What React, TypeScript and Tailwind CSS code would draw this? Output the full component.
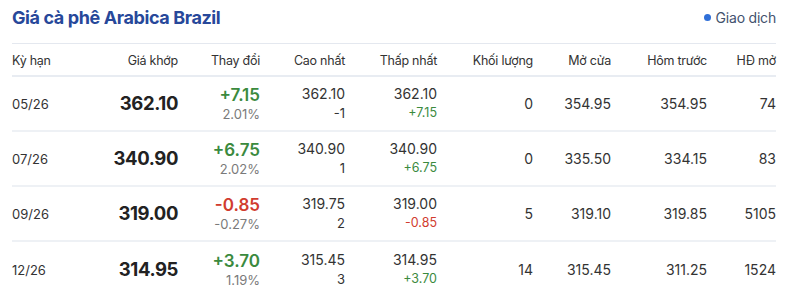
import React from 'react';

type Row = {
  term: string;
  price: string;
  change: string;
  pct: string;
  high: string;
  highSub: string;
  low: string;
  lowSub: string;
  volume: string;
  open: string;
  prev: string;
  oi: string;
};

const rows: Row[] = [
  { term: '05/26', price: '362.10', change: '+7.15', pct: '2.01%', high: '362.10', highSub: '-1', low: '362.10', lowSub: '+7.15', volume: '0', open: '354.95', prev: '354.95', oi: '74' },
  { term: '07/26', price: '340.90', change: '+6.75', pct: '2.02%', high: '340.90', highSub: '1', low: '340.90', lowSub: '+6.75', volume: '0', open: '335.50', prev: '334.15', oi: '83' },
  { term: '09/26', price: '319.00', change: '-0.85', pct: '-0.27%', high: '319.75', highSub: '2', low: '319.00', lowSub: '-0.85', volume: '5', open: '319.10', prev: '319.85', oi: '5105' },
  { term: '12/26', price: '314.95', change: '+3.70', pct: '1.19%', high: '315.45', highSub: '3', low: '314.95', lowSub: '+3.70', volume: '14', open: '315.45', prev: '311.25', oi: '1524' },
];

const cols = 'grid grid-cols-[88px_78px_82px_85px_92px_96px_78px_96px_69px]';

function tone(v: string) {
  return v.startsWith('-') ? 'text-[#d13c2f]' : 'text-[#3b8a3e]';
}

export default function App() {
  return (
    <div className="w-[800px] h-[297px] bg-white overflow-hidden font-['Inter',sans-serif] text-[#2b2b2b]">
      <div className="w-[764px] ml-3">
        <div className="flex items-center justify-between h-[33px] pt-[1px]">
          <h1 className="text-[18px] font-bold text-[#27489a] tracking-[-0.4px]">Giá cà phê Arabica Brazil</h1>
          <div className="flex items-center gap-[5px] text-[14px] text-[#43526e] tracking-[-0.2px]">
            <span className="w-[7px] h-[7px] rounded-full bg-[#2f6fd8]" />
            Giao dịch
          </div>
        </div>

        <div className="mt-[10px] border-t border-[#e4e8ef]">
          <div className={`${cols} h-[33px] items-center text-[12.5px] tracking-[-0.25px] text-[#333] border-b-2 border-[#e8ecf2]`}>
            <div className="pt-[3px]">Kỳ hạn</div>
            <div className="text-right pt-[3px]">Giá khớp</div>
            <div className="text-right pt-[3px]">Thay đổi</div>
            <div className="text-right pt-[3px]">Cao nhất</div>
            <div className="text-right pt-[3px]">Thấp nhất</div>
            <div className="text-right pt-[3px]">Khối lượng</div>
            <div className="text-right pt-[3px]">Mở cửa</div>
            <div className="text-right pt-[3px]">Hôm trước</div>
            <div className="text-right pt-[3px]">HĐ mở</div>
          </div>

          {rows.map((r, i) => (
            <div
              key={r.term}
              className={`${cols} h-[55px] items-center ${i < rows.length - 1 ? 'border-b-2 border-[#eef1f5]' : ''}`}
            >
              <div className="text-[13px] text-[#333] pt-[2px]">{r.term}</div>
              <div className="text-right text-[18.5px] font-bold text-[#222] tracking-[-0.4px]">{r.price}</div>
              <div className="text-right leading-none">
                <div className={`text-[17px] font-semibold ${tone(r.change)}`}>{r.change}</div>
                <div className="text-[13px] text-[#7a7a7a] mt-[4px]">{r.pct}</div>
              </div>
              <div className="text-right leading-none">
                <div className="text-[14px] text-[#333]">{r.high}</div>
                <div className="text-[13px] text-[#333] mt-[6px]">{r.highSub}</div>
              </div>
              <div className="text-right leading-none">
                <div className="text-[14px] text-[#333]">{r.low}</div>
                <div className={`text-[12.5px] mt-[6px] ${tone(r.lowSub)}`}>{r.lowSub}</div>
              </div>
              <div className="text-right text-[14px] text-[#333]">{r.volume}</div>
              <div className="text-right text-[14px] text-[#333]">{r.open}</div>
              <div className="text-right text-[14px] text-[#333]">{r.prev}</div>
              <div className="text-right text-[14px] text-[#333]">{r.oi}</div>
            </div>
          ))}
        </div>
      </div>
    </div>
  );
}
